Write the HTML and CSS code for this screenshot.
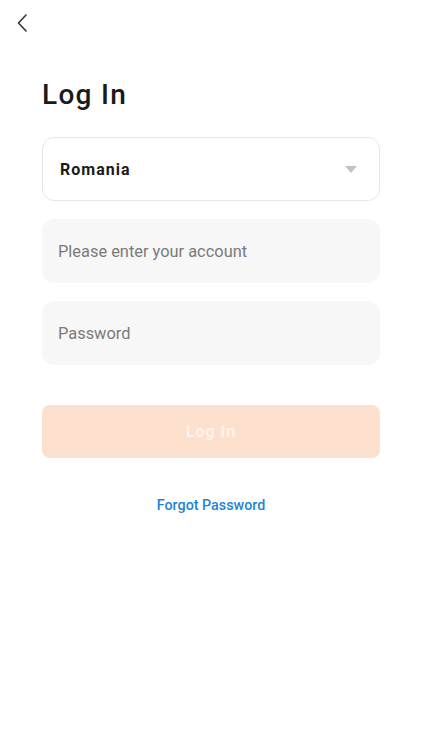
FILE: index.html
```html
<!DOCTYPE html>
<html lang="en">
<head>
  <meta charset="UTF-8">
  <meta name="viewport" content="width=device-width, initial-scale=1.0">
  <title>Log In</title>
  <link rel="stylesheet" href="styles.css">
</head>
<body>
  <header class="topbar">
    <button class="back-btn" aria-label="Back">
      <svg width="12" height="20" viewBox="0 0 12 20" fill="none" stroke="#3a3a3a" stroke-width="1.7" stroke-linecap="round" stroke-linejoin="round">
        <path d="M10 2 L2.5 10 L10 18"/>
      </svg>
    </button>
  </header>

  <main class="login">
    <h1 class="title">Log In</h1>

    <div class="field select">
      <span class="select-value">Romania</span>
      <span class="caret"></span>
    </div>

    <input class="field input" type="text" placeholder="Please enter your account">
    <input class="field input" type="password" placeholder="Password">

    <button class="submit" disabled>Log In</button>

    <a class="forgot" href="#">Forgot Password</a>
  </main>
</body>
</html>
```

FILE: styles.css
```css
:root {
  --text: #1a1a1a;
  --muted: #7a7a7a;
  --field-bg: #f7f7f7;
  --border: #e6e6e6;
  --accent-soft: #fddfcd;
  --link: #1e84d6;
}

body {
  font-family: Roboto, 'Noto Sans', sans-serif;
  background: #fff;
  color: var(--text);
  margin: 0;
  padding: 0;
}

.topbar {
  height: 44px;
  padding: 13px 0 0 16px;
  box-sizing: border-box;
}

.back-btn {
  background: none;
  border: none;
  padding: 0;
  width: 12px;
  height: 20px;
  display: block;
  cursor: pointer;
}

.login {
  display: flex;
  flex-direction: column;
  padding: 0 42px;
}

.title {
  font-size: 28px;
  font-weight: 500;
  letter-spacing: 1.3px;
  margin: 33px 0 24px;
  line-height: 36px;
}

.field {
  box-sizing: border-box;
  width: 100%;
  height: 64px;
  border-radius: 12px;
  margin-bottom: 18px;
  font-family: inherit;
  font-size: 16.4px;
}

.select {
  border: 1px solid var(--border);
  display: flex;
  align-items: center;
  justify-content: space-between;
  padding: 0 22px 0 17px;
}

.select-value {
  font-size: 16px;
  font-weight: 700;
  letter-spacing: 1px;
}

.caret {
  width: 0;
  height: 0;
  border-left: 6px solid transparent;
  border-right: 6px solid transparent;
  border-top: 7px solid #c2c2c2;
}

.input {
  border: none;
  background: var(--field-bg);
  padding: 0 16px;
  color: var(--text);
  outline: none;
}

.input::placeholder {
  color: var(--muted);
}

.submit {
  margin-top: 22px;
  height: 53px;
  border: none;
  border-radius: 8px;
  background: var(--accent-soft);
  color: rgba(255, 255, 255, 0.6);
  font-family: inherit;
  font-size: 16px;
  font-weight: 700;
  letter-spacing: 1px;
}

.forgot {
  align-self: center;
  margin-top: 39px;
  color: var(--link);
  font-size: 14.3px;
  font-weight: 500;
  text-decoration: none;
}
```
